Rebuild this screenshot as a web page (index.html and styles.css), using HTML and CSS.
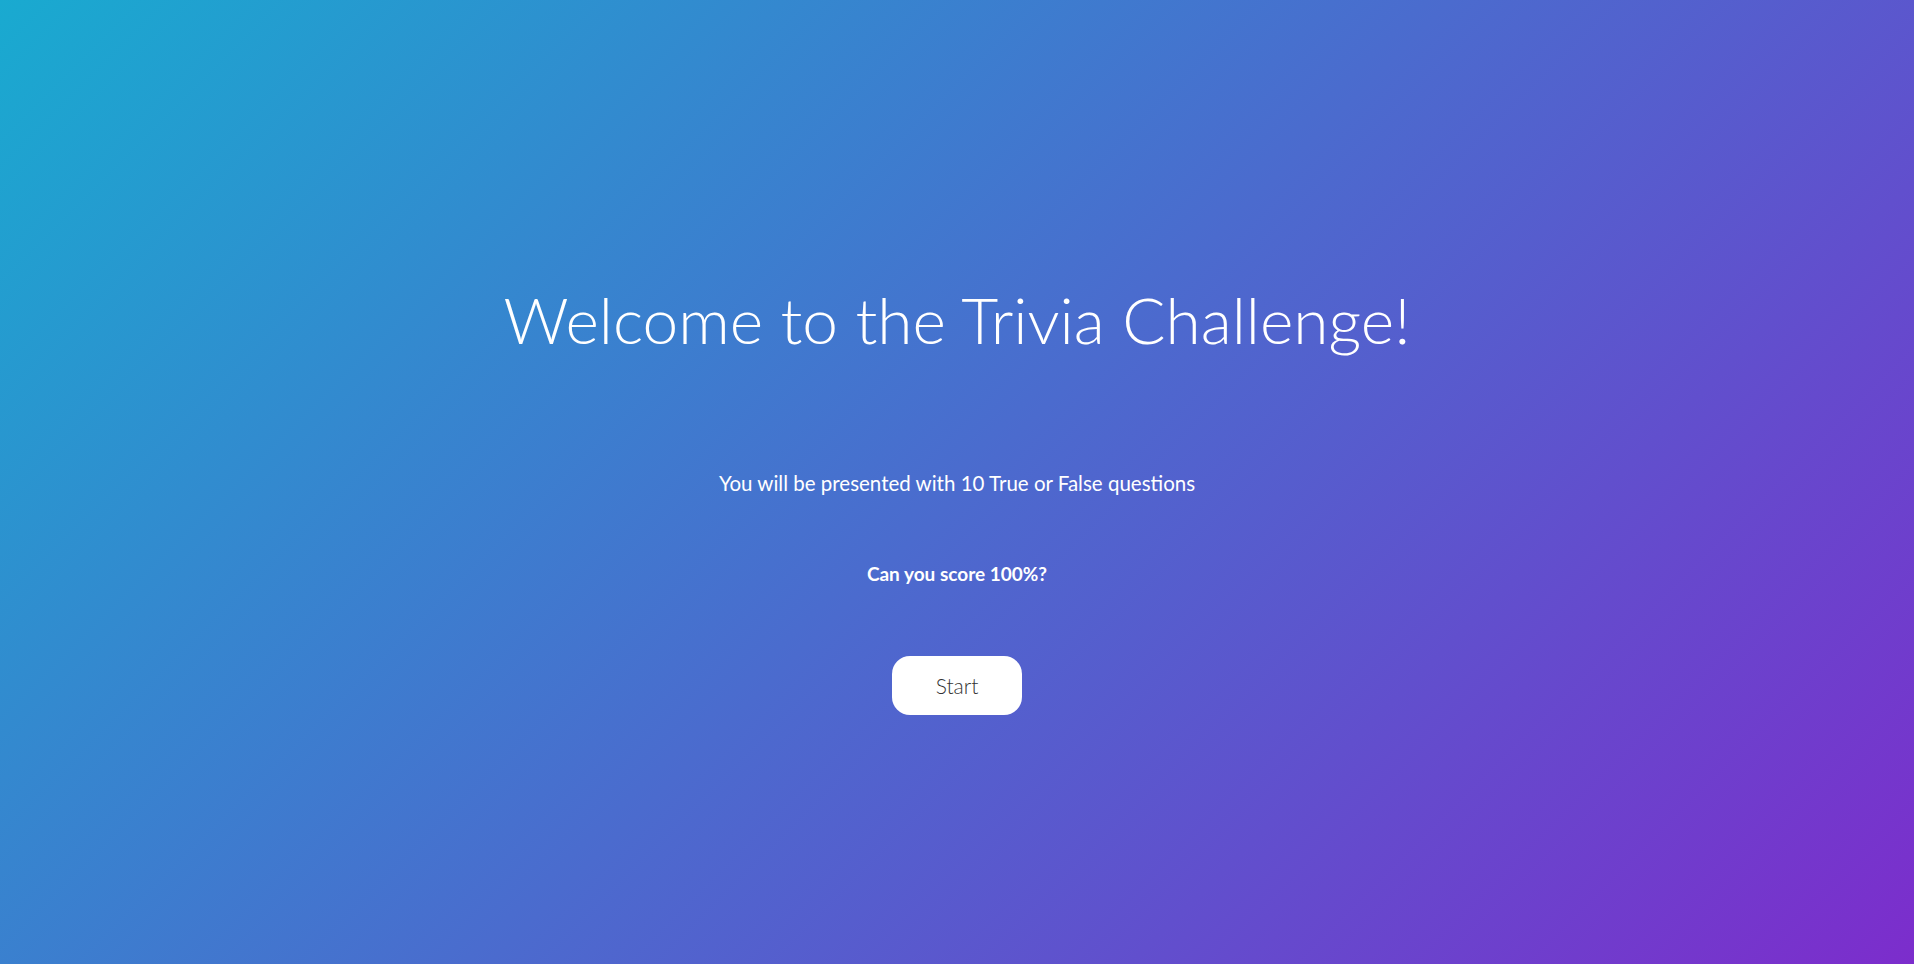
FILE: index.html
```html
<!DOCTYPE html>
<html lang="en">
<head>
<meta charset="utf-8">
<title>Trivia Challenge</title>
<link rel="stylesheet" href="styles.css">
</head>
<body>
<main class="intro">
  <h1 class="intro-title">Welcome to the Trivia Challenge!</h1>
  <p class="intro-text">You will be presented with 10 True or False questions</p>
  <p class="intro-question">Can you score 100%?</p>
  <button class="start-btn" type="button">Start</button>
</main>
</body>
</html>
```
FILE: styles.css
```css
html, body {
  margin: 0;
  padding: 0;
  height: 100%;
}
body {
  background: linear-gradient(135deg, #19aad0 0%, #7c2dcc 100%);
  font-family: Lato, "Open Sans", sans-serif;
  color: #fff;
}
.intro {
  display: flex;
  flex-direction: column;
  align-items: center;
  padding-top: 276px;
}
.intro-title {
  margin: 0;
  font-size: 64px;
  font-weight: 300;
  line-height: 88px;
}
.intro-text {
  margin: 106px 0 0;
  font-size: 20.5px;
  font-weight: 400;
  line-height: 26px;
}
.intro-question {
  margin: 65px 0 0;
  font-size: 19px;
  font-weight: 700;
  line-height: 26px;
}
.start-btn {
  margin-top: 69px;
  width: 130px;
  height: 59px;
  border: none;
  border-radius: 18px;
  background: #fff;
  color: #333;
  font-family: Lato, "Open Sans", sans-serif;
  font-size: 21px;
  font-weight: 300;
  cursor: pointer;
}
```
